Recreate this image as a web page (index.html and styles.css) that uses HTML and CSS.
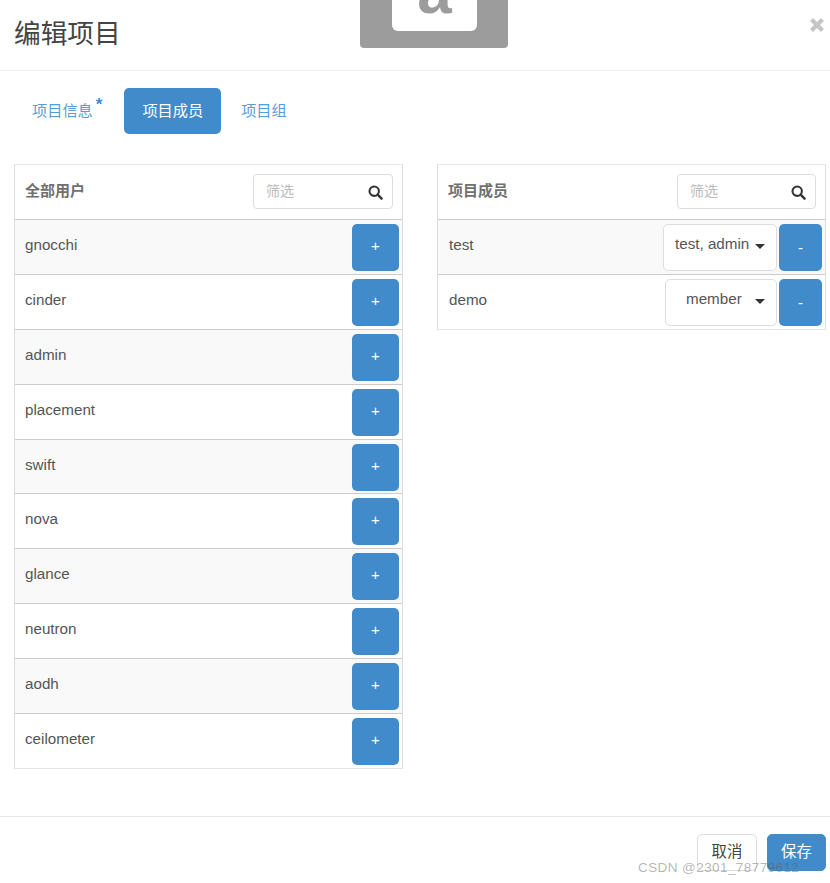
FILE: index.html
```html
<!DOCTYPE html>
<html lang="zh-CN">
<head>
<meta charset="utf-8">
<title>编辑项目</title>
<link rel="stylesheet" href="styles.css">
</head>
<body>
<div class="modal">
  <div class="logo"><div class="logo-card"><span class="logo-letter">a</span></div></div>
  <header class="modal-header">
    <h1 class="modal-title">编辑项目</h1>
    <svg class="close" viewBox="0 0 18 18" aria-label="关闭"><path d="M2 5 5 2l4 4 4-4 3 3-4 4 4 4-3 3-4-4-4 4-3-3 4-4z"/></svg>
  </header>
  <nav class="tabs">
    <a class="tab">项目信息<sup class="req">*</sup></a>
    <a class="tab active">项目成员</a>
    <a class="tab">项目组</a>
  </nav>
  <main class="columns">
    <section class="panel">
      <div class="panel-head">
        <span class="panel-title">全部用户</span>
        <div class="search"><span class="placeholder">筛选</span>
          <svg class="search-icon" viewBox="0 0 16 16"><circle cx="6.6" cy="6.6" r="5" fill="none" stroke="#333" stroke-width="2.2"/><path d="m10.3 10.3 4.2 4.2" stroke="#333" stroke-width="2.6" stroke-linecap="round"/></svg>
        </div>
      </div>
      <div class="row odd"><span class="name">gnocchi</span><button class="btn add">+</button></div>
      <div class="row"><span class="name">cinder</span><button class="btn add">+</button></div>
      <div class="row odd"><span class="name">admin</span><button class="btn add">+</button></div>
      <div class="row"><span class="name">placement</span><button class="btn add">+</button></div>
      <div class="row odd"><span class="name">swift</span><button class="btn add">+</button></div>
      <div class="row"><span class="name">nova</span><button class="btn add">+</button></div>
      <div class="row odd"><span class="name">glance</span><button class="btn add">+</button></div>
      <div class="row"><span class="name">neutron</span><button class="btn add">+</button></div>
      <div class="row odd"><span class="name">aodh</span><button class="btn add">+</button></div>
      <div class="row"><span class="name">ceilometer</span><button class="btn add">+</button></div>
    </section>
    <section class="panel members">
      <div class="panel-head">
        <span class="panel-title">项目成员</span>
        <div class="search"><span class="placeholder">筛选</span>
          <svg class="search-icon" viewBox="0 0 16 16"><circle cx="6.6" cy="6.6" r="5" fill="none" stroke="#333" stroke-width="2.2"/><path d="m10.3 10.3 4.2 4.2" stroke="#333" stroke-width="2.6" stroke-linecap="round"/></svg>
        </div>
      </div>
      <div class="row odd"><span class="name">test</span>
        <div class="role wide"><span class="role-text">test, admin</span><span class="caret"></span></div>
        <button class="btn remove">-</button></div>
      <div class="row"><span class="name">demo</span>
        <div class="role"><span class="role-text">member</span><span class="caret"></span></div>
        <button class="btn remove">-</button></div>
    </section>
  </main>
  <footer class="modal-footer">
    <button class="foot-btn cancel">取消</button>
    <button class="foot-btn save">保存</button>
  </footer>
  <div class="watermark">CSDN @2301_78779612</div>
</div>
</body>
</html>
```
FILE: styles.css
```css
* { box-sizing: border-box; }
html, body { margin: 0; height: 883px; overflow: hidden; background: #fff; }
body { font-family: "Liberation Sans", "Noto Sans CJK SC", sans-serif; font-size: 15px; color: #555; }
.modal { position: relative; height: 883px; overflow: hidden; }
.logo { position: absolute; left: 360px; top: -20px; width: 148px; height: 68px; background: #9c9c9c; border-radius: 0 0 4px 4px; display: flex; justify-content: center; align-items: flex-start; padding-left: 1px; }
.logo-card { width: 85px; height: 51px; background: #fff; border-radius: 0 0 6px 6px; display: flex; justify-content: center; align-items: flex-end; overflow: hidden; }
.logo-letter { font-family: "Liberation Sans", sans-serif; font-weight: bold; font-size: 62px; line-height: 62px; color: #9c9c9c; margin-bottom: 8px; }
.modal-header { height: 71px; border-bottom: 1px solid #eee; display: flex; justify-content: space-between; align-items: flex-start; padding: 0 4px 0 14px; }
.modal-title { margin: 13px 0 0; font-family: "Noto Sans CJK SC", sans-serif; font-weight: 400; font-size: 26.7px; line-height: 38px; color: #444; }
.close { width: 18px; height: 18px; margin-top: 16px; fill: #c6c6c6; }
.tabs { display: flex; padding: 17px 0 0 14px; height: 93px; align-items: flex-start; }
.tab { height: 46px; padding: 0 18px 5px; border-radius: 5px; display: flex; align-items: center; font-family: "Noto Sans CJK SC", sans-serif; font-size: 15.2px; color: #5b9bd5; margin-right: 2px; }
.tab:first-child { padding-right: 20px; margin-right: 2px; }
.tab.active { background: #428bca; color: #fff; }
.req { font-size: 17px; line-height: 1; margin-left: 3px; font-weight: bold; align-self: flex-start; margin-top: 8px; font-family: "Liberation Sans", sans-serif; color: #428bca; }
.columns { display: flex; gap: 34px; padding: 0 4px 0 14px; align-items: flex-start; height: 652px; }
.panel { width: 389px; border: 1px solid #ddd; border-top-color: #e8e8e8; border-bottom: 1px solid #e4e4e4; }
.panel-head { height: 54px; display: flex; justify-content: space-between; align-items: center; padding: 0 9px 2px 10px; }
.panel-title { font-family: "Noto Sans CJK SC", sans-serif; font-weight: 700; font-size: 15px; line-height: 20px; margin-top: -2px; color: #707070; }
.search { width: 140px; height: 35px; border: 1px solid #ddd; border-radius: 4px; display: flex; justify-content: space-between; align-items: center; padding: 0 9px 0 12px; }
.members .search { width: 139px; }
.placeholder { font-family: "Noto Sans CJK SC", sans-serif; font-size: 14px; color: #bbb; margin-top: -3px; }
.search-icon { width: 15px; height: 15px; margin-top: 3px; }
.row { height: 54.9px; border-top: 1px solid #ccc; display: flex; align-items: flex-start; padding: 4px 3px 0 10px; }
.row.odd { background: #f9f9f9; }
.name { flex: 1; font-size: 15.2px; line-height: 42.4px; color: #555; }
.members .name { padding-left: 1px; }
.btn { border: 0; border-radius: 5px; background: #428bca; color: #fff; font-family: "Liberation Sans", sans-serif; font-size: 15px; padding: 0; height: 47px; }
.add { width: 47px; padding-bottom: 4px; }
.remove { width: 43px; margin-left: 2px; }
.role { width: 112px; height: 47px; border: 1px solid #ddd; border-radius: 5px; background: #fff; display: flex; align-items: center; justify-content: space-between; padding: 0 11px 0 20px; }
.role.wide { width: 114px; padding-left: 11px; }
.role-text { font-size: 15.2px; line-height: 18px; color: #555; margin-top: -7px; }
.caret { width: 0; height: 0; border-left: 5px solid transparent; border-right: 5px solid transparent; border-top: 5px solid #333; margin-top: -2px; }
.modal-footer { height: 67px; border-top: 1px solid #e8e8e8; display: flex; justify-content: flex-end; gap: 10px; padding: 17px 4px 0 0; }
.foot-btn { width: 60px; height: 37px; border-radius: 5px; font-family: "Noto Sans CJK SC", sans-serif; font-size: 15.4px; padding: 0 0 5px; }
.cancel { background: #fff; border: 1px solid #ddd; color: #444; }
.save { background: #428bca; border: 1px solid #428bca; color: #fff; width: 59px; }
.watermark { position: absolute; left: 638px; top: 860px; font-family: "Liberation Sans", sans-serif; font-size: 13.5px; letter-spacing: .42px; color: rgba(90,90,90,.45); white-space: nowrap; }
```
